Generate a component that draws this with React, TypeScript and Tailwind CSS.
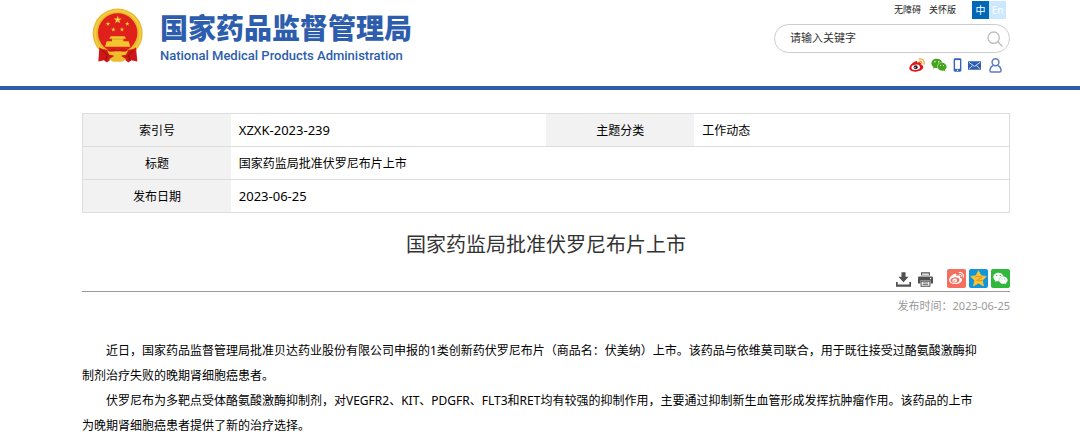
import React from "react";
import { FaWeibo, FaWeixin } from "react-icons/fa";

interface InfoCell {
  label: string;
  value: string;
  styles?: string;
}

const infoRows: InfoCell[][] = [
  [
    { label: "索引号", value: "XZXK-2023-239", styles: "text-[13px]" },
    { label: "主题分类", value: "工作动态" },
  ],
  [{ label: "标题", value: "国家药监局批准伏罗尼布片上市" }],
  [{ label: "发布日期", value: "2023-06-25", styles: "text-[13px]" }],
];

const starPoints = "0,-10 2.4,-3.1 9.5,-3.1 3.8,1.2 5.9,8.1 0,4 -5.9,8.1 -3.8,1.2 -9.5,-3.1 -2.4,-3.1";

function Emblem() {
  return (
    <svg viewBox="0 0 156 164" className="h-[55px] w-[52px] shrink-0" aria-hidden="true">
      <circle cx="77" cy="76" r="75" fill="#e9b92c" />
      <circle cx="77" cy="76" r="68" fill="none" stroke="#f3cc45" strokeWidth="6" />
      <circle cx="77" cy="74" r="59" fill="#e0201b" />
      {/* stars */}
      <g fill="#f7cf3c">
        <polygon points={starPoints} transform="translate(77 35) scale(1.3)" />
        <polygon points={starPoints} transform="translate(48 47) scale(0.7)" />
        <polygon points={starPoints} transform="translate(106 47) scale(0.7)" />
        <polygon points={starPoints} transform="translate(64 64) scale(0.7)" />
        <polygon points={starPoints} transform="translate(90 64) scale(0.7)" />
      </g>
      {/* gate */}
      <path d="M56 84h42l4 8H52zM60 91h34v8H60zM44 99h66l5 17H39z" fill="#f3c52f" />
      <path d="M58 93h38" stroke="#c98a1c" strokeWidth="2" />
      {/* ribbons and gear */}
      <path d="M22 117c14 10 32 9 42 3l13 6 13-6c12 6 29 7 42-3l4 43-18-4-9 7-12-10H57l-12 10-9-7-17 4z" fill="#cf1717" />
      <path d="M31 127l15 14-6 17M124 127l-15 14 6 17" stroke="#8f0f10" strokeWidth="3" fill="none" />
      <path d="M44 124c12 13 22 2 33 6 11-4 21 7 33-6l-8 16-13 2-4 9H69l-4-9-13-2z" fill="#f0bd2c" />
      <path d="M51 153l14-9h24l14 9-12 8H63z" fill="#edbb2e" />
    </svg>
  );
}

function WeiboColor() {
  return (
    <svg viewBox="0 0 48 42" className="h-[14px] w-4">
      <path d="M17 11c4-3 9-3 8 3 6-3 13-1 10 5 14 4 9 21-14 22C8 42 0 36 1 29c1-7 9-15 16-18z" fill="#e0161a" />
      <ellipse cx="20" cy="28" rx="13" ry="8" fill="#fff" transform="rotate(-8 20 28)" />
      <circle cx="20" cy="28" r="6" fill="#222" />
      <circle cx="18" cy="29" r="2" fill="#fff" />
      <path d="M31 3c10-2 16 6 14 15M32 10c4-1 7 2 6 6" stroke="#f2a93a" strokeWidth="4" strokeLinecap="round" fill="none" />
    </svg>
  );
}

function PhoneIcon() {
  return (
    <svg viewBox="0 0 24 40" className="h-[14px] w-[9px]">
      <rect x="1" y="1" width="22" height="38" rx="4" fill="#3563b3" />
      <rect x="5" y="6" width="14" height="25" fill="#fff" />
      <circle cx="12" cy="35" r="2" fill="#fff" />
    </svg>
  );
}

function MailIcon() {
  return (
    <svg viewBox="0 0 42 28" className="h-[9px] w-[13px]">
      <rect width="42" height="28" rx="2" fill="#2d5db0" />
      <path d="M3 4l18 13L39 4M3 25l12-11M39 25L27 14" stroke="#fff" strokeWidth="2.5" fill="none" />
    </svg>
  );
}

function UserIcon() {
  return (
    <svg viewBox="0 0 40 46" className="h-[15px] w-[13px]" fill="none" stroke="#5b7bc0" strokeWidth="4.5">
      <circle cx="20" cy="13" r="10.5" />
      <path d="M13 23C5 26 3 32 3 39q0 4 4 4h26q4 0 4-4c0-7-2-13-10-16" />
    </svg>
  );
}

function SearchIcon() {
  return (
    <svg viewBox="0 0 48 48" className="h-4 w-4" fill="none" stroke="#bdbdbd" strokeWidth="4" strokeLinecap="round">
      <circle cx="20" cy="20" r="17" />
      <path d="M33 33l12 12" />
    </svg>
  );
}

function DownloadIcon() {
  return (
    <svg viewBox="0 0 44 44" className="h-[15px] w-[15px]" fill="#505050">
      <path d="M16 1h12v13h9L22 30 7 14h9z" />
      <path d="M0 29h5v8h34v-8h5v14H0z" />
    </svg>
  );
}

function PrintIcon() {
  return (
    <svg viewBox="0 0 44 44" className="h-[15px] w-[15px]">
      <path d="M9 1h26v9H9zM4 13h36q4 0 4 4v17h-7v-9H7v9H0V17q0-4 4-4z" fill="#505050" />
      <path d="M12 4h20v6H12z" fill="#ddd" />
      <path d="M9 27h26v15H9z" fill="#fff" stroke="#505050" strokeWidth="3" />
      <path d="M14 32h16M14 37h16" stroke="#505050" strokeWidth="2.5" />
      <circle cx="37" cy="19" r="2" fill="#fff" />
    </svg>
  );
}

function QzoneIcon() {
  return (
    <svg viewBox="0 0 48 48" className="h-[17px] w-[17px]">
      <path d="M24 2l7 14 15 2-11 11 3 16-14-8-14 8 3-16L2 18l15-2z" fill="#fdc42d" stroke="#fdc42d" strokeWidth="2" strokeLinejoin="round" />
      <path d="M15 20c6-2 12-2 18 0L20 29c5 2 10 2 14 0" stroke="#e0922a" strokeWidth="3" fill="none" />
    </svg>
  );
}

export default function App() {
  return (
    <div
      lang="zh-CN"
      className="bg-white font-['Noto_Sans','Noto_Sans_CJK_SC',sans-serif] text-xs text-black"
    >
      <header className="flex h-[90px] items-start justify-between border-b-4 border-[#2d5dad] pr-[70px] pl-[92px]">
        <a href="#home" className="flex gap-4 pt-2 text-[#2d5dad]">
          <Emblem />
          <div className="pt-1">
            <div className="text-[28px] leading-8 font-black">国家药品监督管理局</div>
            <div className="pt-0.5 font-['Roboto','Noto_Sans_CJK_SC',sans-serif] text-[13px] leading-5 font-medium">National Medical Products Administration</div>
          </div>
        </a>

        <div className="flex w-[236px] flex-col">
          <div className="flex h-5 items-center justify-end gap-2 pr-1 text-[9px] text-[#222]">
            <a href="#accessible">无障碍</a>
            <a href="#care">关怀版</a>
            <div className="ml-2 flex h-[18px] text-[10px] leading-[18px] text-white">
              <button type="button" className="w-[17px] bg-[#0068b7]">中</button>
              <button type="button" className="w-[17px] bg-[#cce8ff]">En</button>
            </div>
          </div>
          <form className="mt-1 flex h-[29px] items-center rounded-full border border-[#ccc] pr-1.5 pl-[15px]">
            <input
              type="text"
              aria-label="请输入关键字"
              placeholder="请输入关键字"
              className="min-w-0 flex-1 bg-transparent text-[11px] outline-none placeholder:text-[#333]"
            />
            <button type="button" aria-label="搜索"><SearchIcon /></button>
          </form>
          <nav className="flex h-6 items-center justify-end gap-1.5 pr-2">
            <a href="#weibo" aria-label="微博"><WeiboColor /></a>
            <a href="#wechat" aria-label="微信"><FaWeixin className="h-4 w-4 text-[#43a51c]" /></a>
            <a href="#mobile" aria-label="手机版"><PhoneIcon /></a>
            <a href="#mail" aria-label="邮箱"><MailIcon /></a>
            <a href="#user" aria-label="个人中心" className="ml-0.5"><UserIcon /></a>
          </nav>
        </div>
      </header>

      <main className="pt-[23px] pr-[70px] pl-[82px]">
        <table className="w-full table-fixed border-collapse border border-[#ddd]">
          <colgroup>
            <col className="w-[16%]" />
            <col className="w-[34%]" />
            <col className="w-[16%]" />
            <col className="w-[34%]" />
          </colgroup>
          <tbody>
            {infoRows.map((row) => (
              <tr key={row[0].label} className="h-[33px] border-b border-[#ddd]">
                {row.map(({ label, value, styles }) => (
                  <React.Fragment key={label}>
                    <th scope="row" className="bg-[#f2f2f2] pt-0.5 font-normal">{label}</th>
                    <td colSpan={row.length === 1 ? 3 : 1} className={`px-2 pt-0.5 ${styles ?? ""}`}>{value}</td>
                  </React.Fragment>
                ))}
              </tr>
            ))}
          </tbody>
        </table>

        <h1 className="mt-4 text-center text-xl leading-8 text-[#333]">国家药监局批准伏罗尼布片上市</h1>

        <div className="mt-2 flex h-[23px] items-start justify-end border-b border-[#999]">
          <div className="mr-3.5 flex h-5 items-center gap-[7px]">
            <button type="button" aria-label="下载"><DownloadIcon /></button>
            <button type="button" aria-label="打印"><PrintIcon /></button>
          </div>
          <div className="flex gap-[3px]">
            <a href="#share-weibo" aria-label="分享到微博" className="flex h-[19px] w-[19px] items-center justify-center rounded-xs bg-[#f56f61]">
              <FaWeibo className="h-[15px] w-[15px] text-white" />
            </a>
            <a href="#share-qzone" aria-label="分享到QQ空间" className="flex h-[19px] w-[19px] items-center justify-center rounded-xs bg-[#1296db]">
              <QzoneIcon />
            </a>
            <a href="#share-wechat" aria-label="分享到微信" className="flex h-[19px] w-[19px] items-center justify-center rounded-xs bg-[#2fb83c]">
              <FaWeixin className="h-[15px] w-[15px] text-white" />
            </a>
          </div>
        </div>
        <div className="pt-1.5 text-right text-[11px] leading-4 text-[#999]">发布时间：2023-06-25</div>

        <article className="mt-6 leading-[25px]">
          <p className="indent-[2em]">
            近日，国家药品监督管理局批准贝达药业股份有限公司申报的1类创新药伏罗尼布片（商品名：伏美纳）上市。该药品与依维莫司联合，用于既往接受过酪氨酸激酶抑
            <br />
            制剂治疗失败的晚期肾细胞癌患者。
          </p>
          <p className="indent-[2em]">
            伏罗尼布为多靶点受体酪氨酸激酶抑制剂，对VEGFR2、KIT、PDGFR、FLT3和RET均有较强的抑制作用，主要通过抑制新生血管形成发挥抗肿瘤作用。该药品的上市
            <br />
            为晚期肾细胞癌患者提供了新的治疗选择。
          </p>
        </article>
      </main>
    </div>
  );
}
